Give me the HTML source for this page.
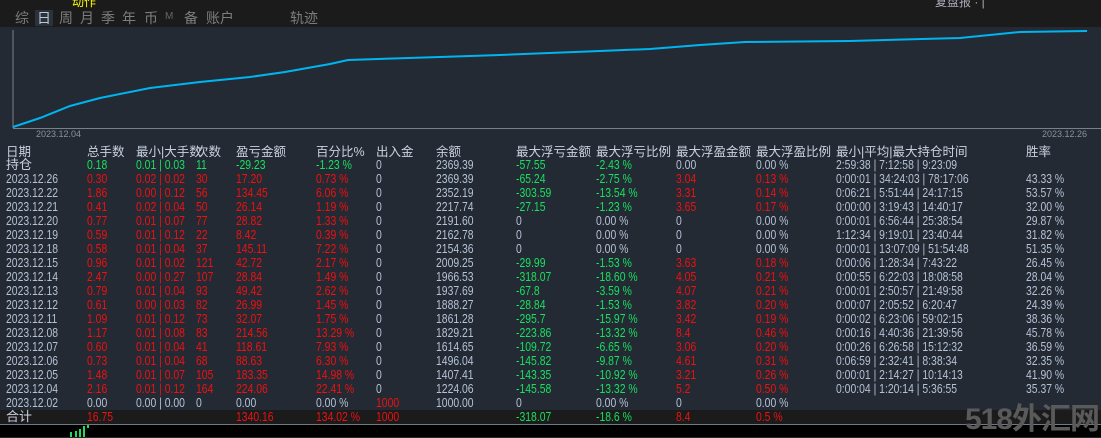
<!DOCTYPE html><html><head><meta charset="utf-8"><style>
body{margin:0;width:1101px;height:437px;overflow:hidden;background:#232a33;font-family:"Liberation Sans","Noto Sans CJK SC",sans-serif;font-size:12px;color:#b4c2d6;position:relative}
.top{position:absolute;left:0;top:0;width:1101px;height:27px;background:#1b1b1b}
.tab{position:absolute;top:8px;font-size:14px;color:#7d7d7d}
.r{position:absolute;left:0;width:1101px;height:14px;line-height:14px;font-size:13px}
.r span{position:absolute;white-space:nowrap;transform:scaleX(0.8);transform-origin:0 0}
.r.hd span{transform:none;font-size:12.5px}
.R{color:#f01010}.G{color:#18e060}.W{color:#c8d2e0}
</style></head><body>
<div class="top"></div>
<div style="position:absolute;left:72px;top:-7px;color:#ff0;font-size:12px">动作</div>
<div style="position:absolute;left:935px;top:-7px;color:#aab;font-size:12px">复盘报 · |</div>
<div class="tab" style="left:15px">综</div>
<div style="position:absolute;left:35px;top:10px;width:18px;height:16px;background:#2a323c"></div>
<div class="tab" style="left:37px;color:#c0c8d4">日</div>
<div class="tab" style="left:59px">周</div><div class="tab" style="left:80px">月</div><div class="tab" style="left:101px">季</div><div class="tab" style="left:122px">年</div><div class="tab" style="left:144px">币</div><div class="tab" style="left:165px;font-size:10px;top:11px;color:#666">M</div><div class="tab" style="left:184px">备</div><div class="tab" style="left:206px">账户</div><div class="tab" style="left:290px">轨迹</div>
<svg style="position:absolute;left:0;top:0" width="1101" height="437">
<line x1="13" y1="30" x2="13" y2="128" stroke="#7a8088" stroke-width="1"/>
<line x1="13" y1="128.5" x2="1101" y2="128.5" stroke="#7a8088" stroke-width="1"/>
<polyline fill="none" stroke="#00b4f0" stroke-width="2" points="13,127 40,118 70,106 100,98 150,88 200,82 250,77 285,72 330,64 348,60 440,57 500,55 600,51 650,49 700,45 745,42 850,41 960,38 1020,32 1087,31"/>
<rect x="0" y="410" width="1101" height="14" fill="#1b1b1b"/>
<rect x="0" y="424" width="1101" height="13" fill="#000"/>
<line x1="0" y1="424.5" x2="1101" y2="424.5" stroke="#6c7a8a"/>
<rect x="70" y="432" width="2" height="5" fill="#18e060"/><rect x="75" y="431" width="2" height="6" fill="#18e060"/><rect x="79" y="429" width="2" height="8" fill="#18e060"/><rect x="83" y="426" width="2" height="11" fill="#18e060"/><rect x="87" y="425" width="2" height="3" fill="#18e060"/>
</svg>
<div style="position:absolute;left:36px;top:129px;font-size:9px;color:#8a929c">2023.12.04</div>
<div style="position:absolute;left:1042px;top:129px;font-size:9px;color:#8a929c">2023.12.26</div>
<div style="position:absolute;left:965px;top:394px;font-size:30px;color:#5a5a5a;font-weight:bold;letter-spacing:-1px">518外汇网</div>
<div id="t"></div>
<script>
const cols=[6,87,136,196,236,316,376,436,516,596,676,756,836,1026];
const hd=["日期","总手数","最小|大手数","次数","盈亏金额","百分比%","出入金","余额","最大浮亏金额","最大浮亏比例","最大浮盈金额","最大浮盈比例","最小|平均|最大持仓时间","胜率"];
const rows=[
["持仓","G0.18","G0.01 | 0.03","G11","G-29.23","G-1.23 %","0","2369.39","G-57.55","G-2.43 %","0.00","0.00 %","2:59:38 | 7:12:58 | 9:23:09",""],
["2023.12.26","R0.30","R0.02 | 0.02","R30","R17.20","R0.73 %","0","2369.39","G-65.24","G-2.75 %","R3.04","R0.13 %","0:00:01 | 34:24:03 | 78:17:06","43.33 %"],
["2023.12.22","R1.86","R0.00 | 0.12","R56","R134.45","R6.06 %","0","2352.19","G-303.59","G-13.54 %","R3.31","R0.14 %","0:06:21 | 5:51:44 | 24:17:15","53.57 %"],
["2023.12.21","R0.41","R0.02 | 0.04","R50","R26.14","R1.19 %","0","2217.74","G-27.15","G-1.23 %","R3.65","R0.17 %","0:00:00 | 3:19:43 | 14:40:17","32.00 %"],
["2023.12.20","R0.77","R0.01 | 0.07","R77","R28.82","R1.33 %","0","2191.60","0","0.00 %","0","0.00 %","0:00:01 | 6:56:44 | 25:38:54","29.87 %"],
["2023.12.19","R0.59","R0.01 | 0.12","R22","R8.42","R0.39 %","0","2162.78","0","0.00 %","0","0.00 %","1:12:34 | 9:19:01 | 23:40:44","31.82 %"],
["2023.12.18","R0.58","R0.01 | 0.04","R37","R145.11","R7.22 %","0","2154.36","0","0.00 %","0","0.00 %","0:00:01 | 13:07:09 | 51:54:48","51.35 %"],
["2023.12.15","R0.96","R0.01 | 0.02","R121","R42.72","R2.17 %","0","2009.25","G-29.99","G-1.53 %","R3.63","R0.18 %","0:00:06 | 1:28:34 | 7:43:22","26.45 %"],
["2023.12.14","R2.47","R0.00 | 0.27","R107","R28.84","R1.49 %","0","1966.53","G-318.07","G-18.60 %","R4.05","R0.21 %","0:00:55 | 6:22:03 | 18:08:58","28.04 %"],
["2023.12.13","R0.79","R0.01 | 0.04","R93","R49.42","R2.62 %","0","1937.69","G-67.8","G-3.59 %","R4.07","R0.21 %","0:00:01 | 2:50:57 | 21:49:58","32.26 %"],
["2023.12.12","R0.61","R0.00 | 0.03","R82","R26.99","R1.45 %","0","1888.27","G-28.84","G-1.53 %","R3.82","R0.20 %","0:00:07 | 2:05:52 | 6:20:47","24.39 %"],
["2023.12.11","R1.09","R0.01 | 0.12","R73","R32.07","R1.75 %","0","1861.28","G-295.7","G-15.97 %","R3.42","R0.19 %","0:00:02 | 6:23:06 | 59:02:15","38.36 %"],
["2023.12.08","R1.17","R0.01 | 0.08","R83","R214.56","R13.29 %","0","1829.21","G-223.86","G-13.32 %","R8.4","R0.46 %","0:00:16 | 4:40:36 | 21:39:56","45.78 %"],
["2023.12.07","R0.60","R0.01 | 0.04","R41","R118.61","R7.93 %","0","1614.65","G-109.72","G-6.65 %","R3.06","R0.20 %","0:00:26 | 6:26:58 | 15:12:32","36.59 %"],
["2023.12.06","R0.73","R0.01 | 0.04","R68","R88.63","R6.30 %","0","1496.04","G-145.82","G-9.87 %","R4.61","R0.31 %","0:06:59 | 2:32:41 | 8:38:34","32.35 %"],
["2023.12.05","R1.48","R0.01 | 0.07","R105","R183.35","R14.98 %","0","1407.41","G-143.35","G-10.92 %","R3.21","R0.26 %","0:00:01 | 2:14:27 | 10:14:13","41.90 %"],
["2023.12.04","R2.16","R0.01 | 0.12","R164","R224.06","R22.41 %","0","1224.06","G-145.58","G-13.32 %","R5.2","R0.50 %","0:00:04 | 1:20:14 | 5:36:55","35.37 %"],
["2023.12.02","0.00","0.00 | 0.00","0","0.00","0.00 %","R1000","1000.00","0","0.00 %","0","0.00 %","",""],
["合计","R16.75","","","R1340.16","R134.02 %","R1000","","G-318.07","G-18.6 %","R8.4","R0.5 %","",""]];
let h='<div class="r W hd" style="top:145px">'+hd.map((s,i)=>`<span style="left:${cols[i]}px">${s}</span>`).join('')+'</div>';
rows.forEach((r,j)=>{const y=j==0?158:172+(j-1)*14;
h+=`<div class="r" style="top:${y}px">`+r.map((s,i)=>{let c='';if(s[0]=='R'||s[0]=='G'){c=s[0];s=s.slice(1)}
if(i==0&&(j==0||j==18))return `<span class="W" style="left:${cols[i]}px;font-size:13px;transform:none">${s}</span>`;
return `<span class="${c}" style="left:${cols[i]}px">${s}</span>`}).join('')+'</div>'});
document.getElementById('t').innerHTML=h;
</script>
</body></html>
